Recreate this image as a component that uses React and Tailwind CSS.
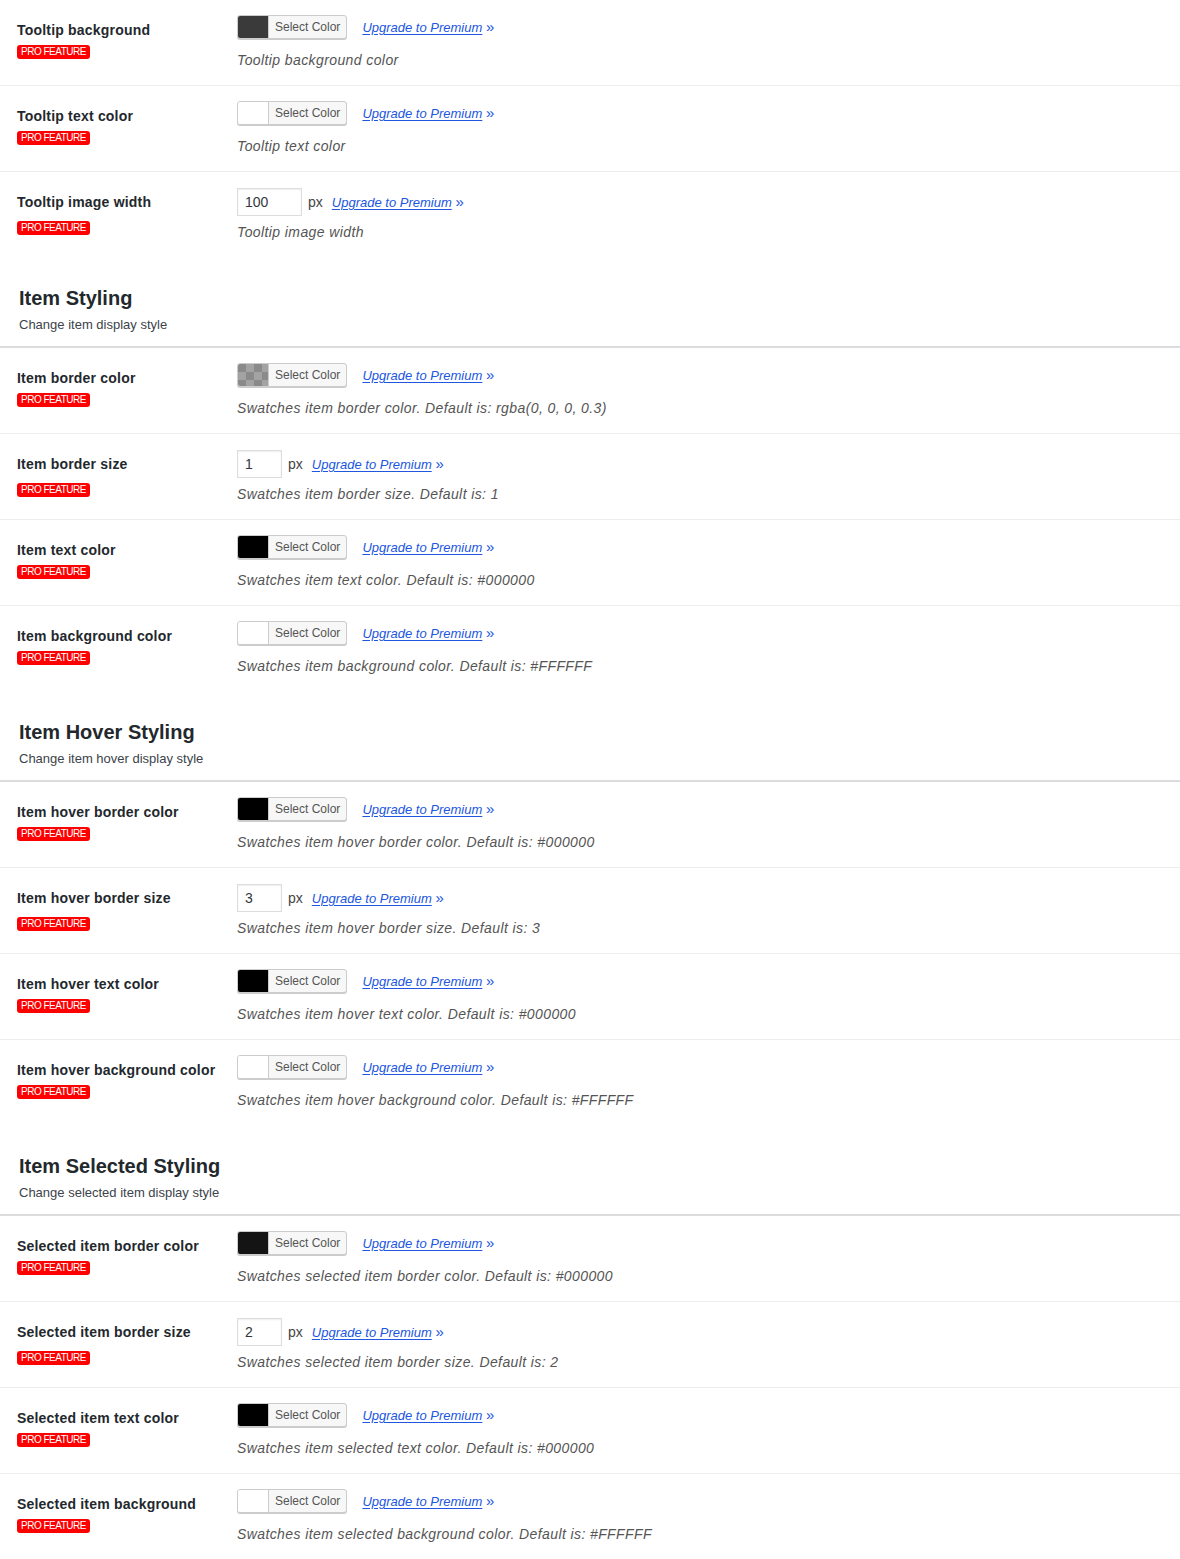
import React from 'react';

const font = { fontFamily: '"Liberation Sans", Arial, sans-serif' };

const sections = [
  {
    rows: [
      { label: 'Tooltip background', type: 'color', swatch: 'dark', desc: 'Tooltip background color' },
      { label: 'Tooltip text color', type: 'color', swatch: 'white', desc: 'Tooltip text color' },
      { label: 'Tooltip image width', type: 'number', value: '100', wide: true, desc: 'Tooltip image width' },
    ],
  },
  {
    title: 'Item Styling',
    subtitle: 'Change item display style',
    rows: [
      { label: 'Item border color', type: 'color', swatch: 'checker', desc: 'Swatches item border color. Default is: rgba(0, 0, 0, 0.3)' },
      { label: 'Item border size', type: 'number', value: '1', desc: 'Swatches item border size. Default is: 1' },
      { label: 'Item text color', type: 'color', swatch: 'black', desc: 'Swatches item text color. Default is: #000000' },
      { label: 'Item background color', type: 'color', swatch: 'white', desc: 'Swatches item background color. Default is: #FFFFFF' },
    ],
  },
  {
    title: 'Item Hover Styling',
    subtitle: 'Change item hover display style',
    rows: [
      { label: 'Item hover border color', type: 'color', swatch: 'black', desc: 'Swatches item hover border color. Default is: #000000' },
      { label: 'Item hover border size', type: 'number', value: '3', desc: 'Swatches item hover border size. Default is: 3' },
      { label: 'Item hover text color', type: 'color', swatch: 'black', desc: 'Swatches item hover text color. Default is: #000000' },
      { label: 'Item hover background color', type: 'color', swatch: 'white', desc: 'Swatches item hover background color. Default is: #FFFFFF' },
    ],
  },
  {
    title: 'Item Selected Styling',
    subtitle: 'Change selected item display style',
    rows: [
      { label: 'Selected item border color', type: 'color', swatch: 'nearblack', desc: 'Swatches selected item border color. Default is: #000000' },
      { label: 'Selected item border size', type: 'number', value: '2', desc: 'Swatches selected item border size. Default is: 2' },
      { label: 'Selected item text color', type: 'color', swatch: 'black', desc: 'Swatches item selected text color. Default is: #000000' },
      { label: 'Selected item background', type: 'color', swatch: 'white', desc: 'Swatches item selected background color. Default is: #FFFFFF' },
    ],
  },
];

const Swatch = ({ kind }) => {
  if (kind === 'checker') {
    return (
      <svg width="30" height="22" className="block">
        <defs>
          <pattern id="chk" width="16" height="16" patternUnits="userSpaceOnUse">
            <rect width="16" height="16" fill="#a3a3a3" />
            <rect width="8" height="8" fill="#8a8a8a" />
            <rect x="8" y="8" width="8" height="8" fill="#8a8a8a" />
          </pattern>
        </defs>
        <rect width="30" height="22" fill="url(#chk)" />
      </svg>
    );
  }
  const bg = {
    dark: 'bg-[#3a3a3a]',
    white: 'bg-white',
    black: 'bg-black',
    nearblack: 'bg-[#141414]',
  }[kind];
  return <div className={`w-[30px] h-full ${bg}`} />;
};

const UpgradeLink = ({ className }) => (
  <span className={`text-[13px] italic text-[#2056e0] whitespace-nowrap ${className}`}>
    <span className="underline underline-offset-2">Upgrade to Premium</span>{' '}
    <span className="text-[15px] not-italic">»</span>
  </span>
);

const ColorControl = ({ swatch }) => (
  <div className="flex items-start h-[30px]">
    <div className="flex h-[24px] rounded-[3px] border border-[#cccccc] bg-[#f7f7f7] shadow-[0_1px_0_#cccccc] overflow-hidden">
      <Swatch kind={swatch} />
      <div className="border-l border-[#cccccc] px-[6px] text-[12px] leading-[22px] text-[#555555]">
        Select Color
      </div>
    </div>
    <UpgradeLink className="ml-[15px] leading-[24px]" />
  </div>
);

const NumberControl = ({ value, wide }) => (
  <div className="flex items-center h-[30px]">
    <div
      className={`h-[28px] ${wide ? 'w-[65px]' : 'w-[45px]'} border border-[#dddddd] bg-white shadow-[inset_0_1px_2px_rgba(0,0,0,0.07)] pl-[7px] text-[14px] leading-[26px] text-[#32373c]`}
    >
      {value}
    </div>
    <span className="ml-[6px] text-[14px] text-[#444444]">px</span>
    <UpgradeLink className="ml-[9px]" />
  </div>
);

const Row = ({ row, last }) => (
  <div className={`flex h-[86px] pt-[15px] pl-[17px] ${last ? '' : 'border-b border-[#ededed]'}`}>
    <div className="w-[220px]">
      <div className="mt-[5px] text-[14px] leading-5 font-bold tracking-[0.2px] text-[#23282d]">{row.label}</div>
      <div
        className={`${row.type === 'number' ? 'mt-[9px]' : 'mt-[5px]'} w-fit h-[14px] rounded-[3px] bg-[#ff0000] px-[4px] text-[10px] tracking-[-0.5px] leading-[14px] text-white`}
      >
        PRO FEATURE
      </div>
    </div>
    <div className="flex-1">
      {row.type === 'color' ? <ColorControl swatch={row.swatch} /> : <NumberControl value={row.value} wide={row.wide} />}
      <div className="mt-[5px] text-[14px] leading-5 italic tracking-[0.4px] text-[#555555]">{row.desc}</div>
    </div>
  </div>
);

const App = () => {
  return (
    <div className="min-h-screen bg-white" style={font}>
      {sections.map((section, i) => (
        <div key={i}>
          {section.title && (
            <div className="pt-[26px] pb-[11px] pl-[19px] border-b-2 border-[#dcdcde]">
              <h2 className="text-[20px] leading-[28px] font-bold text-[#23282d]">{section.title}</h2>
              <p className="mt-[3px] text-[13px] leading-5 text-[#3c434a]">{section.subtitle}</p>
            </div>
          )}
          {section.rows.map((row, j) => (
            <Row key={j} row={row} last={j === section.rows.length - 1} />
          ))}
        </div>
      ))}
    </div>
  );
};

export default App;
